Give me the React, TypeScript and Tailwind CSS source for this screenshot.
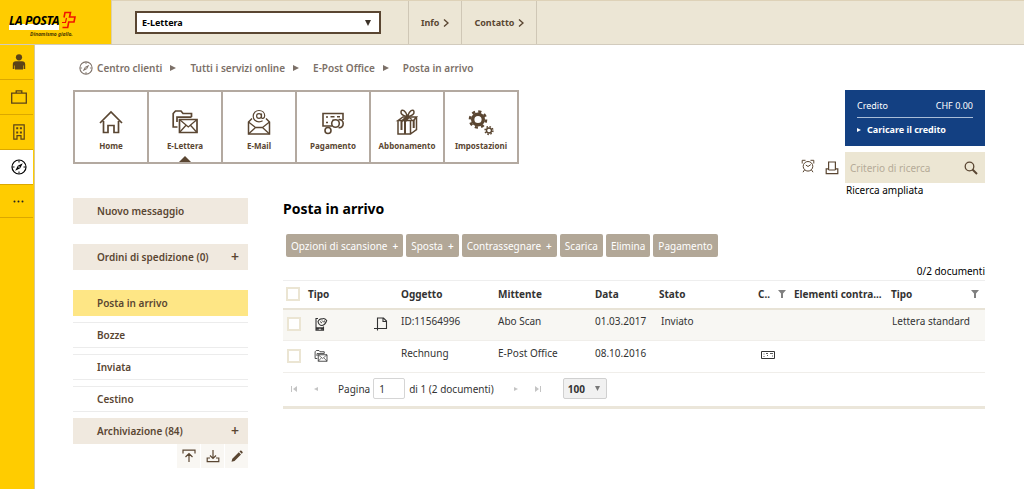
import { useState } from 'react';
import type { ReactNode } from 'react';

type IconProps = { className?: string };

const CompassIcon = ({ className }: IconProps) => (
  <svg viewBox="0 0 16 16" className={className} fill="none" stroke="currentColor">
    <circle cx="8" cy="8" r="7" strokeWidth="1.2" />
    <path d="M8 1.5v2M8 12.5v2M1.5 8h2M12.5 8h2" strokeWidth="1" />
    <path d="M11.8 4.2 9.2 9.2 4.2 11.8 6.8 6.8Z" fill="currentColor" stroke="none" />
    <circle cx="8" cy="8" r="0.8" fill="#fff" stroke="none" />
  </svg>
);

const PersonIcon = () => (
  <svg viewBox="0 0 14 16" className="w-3.5 h-4" fill="#5b4318">
    <circle cx="7" cy="3.3" r="3.1" />
    <path d="M4 7.2h6c2 0 3.2 1.2 3.2 3V15h-1.6v-3.6H11v4.2H3v-4.2h-.6V15H.8v-4.8c0-1.800 1.200-3 3.200-3Z" />
  </svg>
);

const BriefcaseIcon = () => (
  <svg viewBox="0 0 16 14" className="w-4 h-3.5" fill="none" stroke="#5b4318" strokeWidth="1.3">
    <path d="M.7 3.2h14.6v10H.7ZM5.2 3V.8h5.6V3" />
  </svg>
);

const BuildingIcon = () => (
  <svg viewBox="0 0 12 16" className="w-3 h-4" fill="none" stroke="#5b4318" strokeWidth="1.2">
    <path d="M.8.8h10.4v14.4H8v-3.6H4v3.6H.8Z" />
    <path d="M3.2 4.2h2M6.9 4.2h2M3.2 8.4h2M6.900 8.400h2" strokeWidth="2" />
  </svg>
);

const DotsIcon = () => (
  <svg viewBox="0 0 11 3" className="w-[11px] h-[3px]" fill="#222">
    <circle cx="1.5" cy="1.5" r="1" />
    <circle cx="5.5" cy="1.5" r="1" />
    <circle cx="9.5" cy="1.5" r="1" />
  </svg>
);

const HomeIcon = () => (
  <svg viewBox="0 0 28 28" className="size-7" fill="none" stroke="#5a4632" strokeWidth="1.7">
    <path d="M3 15 14 4l11 11M6.5 13v11.5H11V17.500h6v7h4.500V13" />
  </svg>
);

const FolderMailIcon = ({ className }: IconProps) => (
  <svg viewBox="0 0 28 28" className={className} fill="none" stroke="currentColor" strokeWidth="1.7">
    <path d="M6.5 19H2.2V5.5L4.5 3H10l2 2.500h8.500V9" />
    <path d="M6 14V9.200h14.500" />
    <path d="M8.5 11.5H26v13H8.500Z" />
    <path d="m8.500 11.500 8.800 7.500 8.700-7.500M8.500 24.500l6.300-7M26 24.500l-6.300-7" strokeWidth="1.300" />
  </svg>
);

const EmailIcon = () => (
  <svg viewBox="0 0 28 28" className="size-7" fill="none" stroke="#5a4632" strokeWidth="1.5">
    <path d="M7 10.500 3.500 14v12h21V14L21 10.500" />
    <path d="m3.500 14 7 5.500L3.500 26M24.500 14l-7 5.500 7 6.500M10.500 19.500h7" strokeWidth="1.300" />
    <circle cx="14" cy="8" r="2.400" strokeWidth="1.200" />
    <path
      d="M16.500 5.500v3.700c0 2 3.200 1.500 3.200-1.500 0-3.200-2.500-5.200-5.700-5.200S8.200 5 8.200 8.200s2.600 5.600 5.800 5.600c1.500 0 2.700-.4 3.600-1"
      strokeWidth="1.200"
    />
  </svg>
);

const PaymentIcon = () => (
  <svg viewBox="0 0 28 28" className="size-7" fill="none" stroke="#5a4632" strokeWidth="1.6">
    <path d="M13 18H4V5.500h20V12" />
    <path d="M7 9h2M7 14.500h2M11.500 8.800h4M18 8.800h3M14 14.500v-3" strokeWidth="1.500" />
    <circle cx="16.500" cy="15.500" r="3.800" fill="#fff" />
    <path d="M19.500 11.800c2.500-.8 4.700.8 4.700 3.700s-2 4.600-4.700 4" />
    <circle cx="9" cy="22.500" r="3" fill="#fff" />
  </svg>
);

const GiftIcon = () => (
  <svg viewBox="0 0 28 28" className="size-7" fill="none" stroke="#5a4632" strokeWidth="1.5">
    <path d="m5 12.500 5-3.500h13.500l-3 3.500ZM5 12.500V26h12.500V12.500M17.500 26l6-4.500V9" />
    <path d="M8.500 22v-8.500l4.500-4M12 26V13.500l3.500-4M20.700 20v-8" strokeWidth="2" />
    <path d="M14.500 8.500C13 2.500 8.500.5 8 3.800c-.4 3 3.500 4.200 6.500 4.700C16 2.500 20.500.5 21 3.800c.4 3-3.500 4.200-6.500 4.700Z" />
    <path d="m14.500 8.500-3.500 3M14.500 8.500l4.500 3" />
  </svg>
);

const SettingsIcon = () => (
  <svg viewBox="0 0 28 28" className="size-7" fill="none" stroke="#5a4632">
    <circle cx="11" cy="11.500" r="5.300" strokeWidth="3.400" />
    <circle cx="11" cy="11.500" r="8" strokeWidth="2.600" strokeDasharray="3.140 3.140" />
    <circle cx="22" cy="22.500" r="2.500" strokeWidth="1.400" />
    <circle cx="22" cy="22.500" r="3.900" strokeWidth="1.500" strokeDasharray="1.530 1.530" />
  </svg>
);

const AlarmIcon = () => (
  <svg viewBox="0 0 14 14" className="size-3.5" fill="none" stroke="#5a4632" strokeWidth="1">
    <circle cx="7" cy="7.300" r="4.800" />
    <path d="M7 7.500 4.800 6M7 7.500l2.800-1.900M3.600 10.800 2 13.200M10.400 10.800l1.600 2.400M1.200 4.500V1.300h3.300M12.800 4.500V1.300H9.500" />
  </svg>
);

const PrintIcon = () => (
  <svg viewBox="0 0 14 14" className="size-3.5" fill="none" stroke="#5a4632" strokeWidth="1.2">
    <path d="M3.600 9V1h6.800v8M3.600 7.800H1.200v4.800h11.600V7.800h-2.400M3.600 9h6.800" />
  </svg>
);

const SearchIcon = () => (
  <svg viewBox="0 0 14 14" className="size-3.5" fill="none" stroke="#5a4632">
    <circle cx="5.500" cy="5.500" r="4.300" strokeWidth="1.300" />
    <path d="m8.500 8.500 4.500 4.500" strokeWidth="2" />
  </svg>
);

const FilterIcon = () => (
  <svg viewBox="0 0 8 8" className="size-2" fill="#808080">
    <path d="M0 0h8L5 3.500V8H3V3.500Z" />
  </svg>
);

const PhoneScanIcon = () => (
  <svg viewBox="0 0 14 14" className="size-3.5" fill="none" stroke="#333" strokeWidth="1.1">
    <path d="M4 1.500H2v11.700h7.500V9.500" />
    <path d="M2 12h2.800M6.800 12h2.700M2 11h7.500" strokeWidth="1.500" />
    <path d="M4 4.500C5 2.500 6.500 1.500 8 2c1.500-1 3-.5 4.700 1.500C12 5.500 10.500 8 8 8.500 6 8.500 4.500 7 4 4.500Z" />
    <path d="M6 4.500 8 6M8 3.500l1.500 1.500M10.500 3.500l-.5 2" strokeWidth=".9" />
  </svg>
);

const PageIcon = () => (
  <svg viewBox="0 0 14 14" className="size-3.5" fill="none" stroke="#333" strokeWidth="1.1">
    <path d="M3.500 13.500V1h6l3 3v7.500H0M9 1v3.500h3.500" />
  </svg>
);

const PaySlipIcon = () => (
  <svg viewBox="0 0 14 8" className="w-3.5 h-2" fill="none" stroke="#333" strokeWidth="1">
    <path d="M.5.5h13v7H.5Z" />
    <path d="M2.500 3h1M5 2.500h2M9 2.500h3M2.500 5.500h1M6 4.500h1M11 5h1" strokeWidth=".8" />
  </svg>
);

const UploadIcon = () => (
  <svg viewBox="0 0 14 14" className="size-3.5" fill="none" stroke="#5a4632" strokeWidth="1.2">
    <path d="M1 4.500V1.200h12v3.300M7 13V4.500M3.500 8 7 4.500 10.500 8" />
  </svg>
);

const DownloadIcon = () => (
  <svg viewBox="0 0 14 14" className="size-3.5" fill="none" stroke="#5a4632" strokeWidth="1.2">
    <path d="M4 9H1.200v3.600h11.600V9H10M7 1v8.500M4 6.500l3 3 3-3" />
  </svg>
);

const PencilIcon = () => (
  <svg viewBox="0 0 14 14" className="size-3.5" fill="#5a4632">
    <path d="m1.500 12.800.8-3L8.800 3.300l2.200 2.200-6.500 6.500ZM9.500 2.600l1-1c.6-.6 2.800 1.600 2.200 2.200l-1 1Z" />
  </svg>
);

const Triangle = ({ className }: IconProps) => (
  <svg viewBox="0 0 6 6" className={className} fill="currentColor">
    <path d="M0 0l6 3-6 3Z" />
  </svg>
);

const DownTriangle = ({ className }: IconProps) => (
  <svg viewBox="0 0 6 6" className={className} fill="currentColor">
    <path d="M0 0h6L3 6Z" />
  </svg>
);

const rail = [
  { label: 'Profilo', icon: <PersonIcon /> },
  { label: 'Lavoro', icon: <BriefcaseIcon /> },
  { label: 'Azienda', icon: <BuildingIcon /> },
  { label: 'Centro clienti', icon: <CompassIcon className="size-4 text-black" />, active: true },
  { label: 'Altro', icon: <DotsIcon /> },
];

const crumbs = ['Centro clienti', 'Tutti i servizi online', 'E-Post Office', 'Posta in arrivo'];

const tiles = [
  { label: 'Home', icon: <HomeIcon /> },
  { label: 'E-Lettera', icon: <FolderMailIcon className="size-7" />, active: true },
  { label: 'E-Mail', icon: <EmailIcon /> },
  { label: 'Pagamento', icon: <PaymentIcon /> },
  { label: 'Abbonamento', icon: <GiftIcon /> },
  { label: 'Impostazioni', icon: <SettingsIcon /> },
];

const actions = [
  { label: 'Opzioni di scansione', plus: true },
  { label: 'Sposta', plus: true },
  { label: 'Contrassegnare', plus: true },
  { label: 'Scarica' },
  { label: 'Elimina' },
  { label: 'Pagamento' },
];

const rows = [
  {
    id: 1,
    icon: <PhoneScanIcon />,
    attachment: <PageIcon />,
    subject: 'ID:11564996',
    sender: 'Abo Scan',
    date: '01.03.2017',
    state: 'Inviato',
    slip: null,
    type: 'Lettera standard',
  },
  {
    id: 2,
    icon: <FolderMailIcon className="size-3.5" />,
    attachment: null,
    subject: 'Rechnung',
    sender: 'E-Post Office',
    date: '08.10.2016',
    state: '',
    slip: <PaySlipIcon />,
    type: '',
  },
];

const Logo = () => (
  <a href="#" className="-mt-px w-28 shrink-0 bg-[#ffcc00] border-r border-[#d9cfae] pl-[9px] pt-2.5 block">
    <div className="flex items-center gap-0.5">
      <div className="bg-linear-to-b from-[#ffcc00] from-70% to-white to-70% text-black text-[12px] leading-[18px] pt-0.5 font-bold italic tracking-tight whitespace-nowrap">
        LA POSTA
      </div>
      <svg viewBox="0 0 16 18" className="w-4 h-[18px] shrink-0" fill="none" stroke="#f01400" strokeWidth="1.6">
        <path d="M3 6.500 4 1.500h5.500L8.500 6H14l-1 5H7.700l-1 5.500H1.500" />
        <path d="M1 11.500h3.500L5.500 7" strokeWidth="1.200" />
      </svg>
    </div>
    <div className="pl-[21px] text-[5px] leading-2 font-bold italic text-[#4d3b00]">Dinamismo giallo.</div>
  </a>
);

const MenuItem = ({ label, tone, plus }: { label: string; tone: string; plus?: boolean }) => (
  <button className={`w-full h-[26px] pl-6 pr-[9px] flex items-center justify-between text-left ${tone}`}>
    <span>{label}</span>
    {plus && <span className="text-[14px] leading-none">+</span>}
  </button>
);

const Check = ({ label }: { label: string }) => (
  <input
    type="checkbox"
    aria-label={label}
    className="appearance-none block size-3.5 border-2 border-[#ebe5d3] bg-white checked:bg-[#b2a797]"
  />
);

const PagerButton = ({ label, children }: { label: string; children: ReactNode }) => (
  <button aria-label={label} className="w-[22px] h-5 flex items-center justify-center text-[#c4c4c4]">
    {children}
  </button>
);

const App = () => {
  const [service, setService] = useState('E-Lettera');
  const [page, setPage] = useState('1');
  const [pageSize, setPageSize] = useState('100');
  const [query, setQuery] = useState('');

  return (
    <div className="min-h-screen flex flex-col bg-white font-['Noto_Sans',sans-serif] text-[10px] leading-4 text-[#333]">
      <header className="h-[45px] flex bg-[#ece6d5] border-t border-t-[#ded2b8] border-b border-b-[#d2cbbd]">
        <Logo />
        <div className="flex items-center pl-[23px] pr-[27px] border-r border-[#cfc7b6]">
          <div className="relative">
            <select
              aria-label="Servizio"
              value={service}
              onChange={(e) => setService(e.target.value)}
              className="appearance-none w-[246px] h-[23px] bg-white border-2 border-[#5a4632] px-[5px] text-[9px] font-bold text-black"
            >
              <option>E-Lettera</option>
              <option>E-Mail</option>
            </select>
            <DownTriangle className="absolute right-[10px] top-[9px] size-1.5 text-[#3c3228] pointer-events-none" />
          </div>
        </div>
        {['Info', 'Contatto'].map((item) => (
          <a
            key={item}
            href="#"
            className="flex items-center gap-1 px-3 text-[9px] font-bold text-[#5a4632] border-r border-[#cfc7b6]"
          >
            {item}
            <svg viewBox="0 0 6 8" className="w-1.5 h-2" fill="none" stroke="currentColor" strokeWidth="1.4">
              <path d="M1 .5 5 4 1 7.500" />
            </svg>
          </a>
        ))}
      </header>

      <div className="flex-1 flex">
        <nav className="w-[35px] shrink-0 bg-[#ffcc00] border-r border-[#d8c893]">
          {rail.map((item) => (
            <a
              key={item.label}
              href="#"
              aria-label={item.label}
              className={`h-[34px] mr-px pl-1 flex items-center justify-center border-b border-[#dba800] box-content last:h-8 ${
                item.active ? 'bg-white' : ''
              }`}
            >
              {item.icon}
            </a>
          ))}
        </nav>

        <div className="flex-1 min-w-0 pl-[38px] pr-[39px] pt-[15px]">
          <div className="flex items-center pl-1.5 text-[10px] font-semibold text-[#7c7068]">
            <CompassIcon className="size-3.5 mr-1" />
            {crumbs.map((crumb, idx) => (
              <span key={crumb} className="flex items-center">
                {idx > 0 && <Triangle className="size-1.5 mr-3.5 ml-2" />}
                <a href="#">{crumb}</a>
              </span>
            ))}
          </div>

          <div className="mt-3.5 flex justify-between items-start">
            <div className="flex border-2 border-r-0 border-[#b3a9a0]">
              {tiles.map((tile) => (
                <a
                  key={tile.label}
                  href="#"
                  className="relative w-[74px] h-[70px] pt-4 flex flex-col items-center gap-0.5 border-r-2 border-[#b3a9a0] text-[8px] font-bold text-[#5a4632]"
                >
                  {tile.icon}
                  {tile.label}
                  {tile.active && (
                    <svg viewBox="0 0 12 6" className="absolute bottom-0 w-3 h-1.5" fill="#5a4632">
                      <path d="M6 0l6 6H0Z" />
                    </svg>
                  )}
                </a>
              ))}
            </div>

            <div>
              <div className="ml-11 w-[140px] h-14 bg-[#134082] text-white px-3 pt-2">
                <div className="flex justify-between border-b border-[#a9bdd8] pb-[3px] text-[9px]">
                  <span>Credito</span>
                  <span>CHF 0.00</span>
                </div>
                <a href="#" className="flex items-center gap-1.5 pt-1 text-[9px] font-bold">
                  <Triangle className="size-1" />
                  Caricare il credito
                </a>
              </div>
              <div className="mt-1.5 flex items-center">
                <button aria-label="Promemoria" className="w-6 pb-1">
                  <AlarmIcon />
                </button>
                <button aria-label="Stampa" className="w-5">
                  <PrintIcon />
                </button>
                <div className="w-[140px] h-[31px] flex items-center bg-[#ece6d3] px-[5px]">
                  <input
                    aria-label="Criterio di ricerca"
                    placeholder="Criterio di ricerca"
                    value={query}
                    onChange={(e) => setQuery(e.target.value)}
                    className="flex-1 min-w-0 bg-transparent outline-none placeholder:text-[#b5ab98]"
                  />
                  <button aria-label="Cerca" className="pr-0.5">
                    <SearchIcon />
                  </button>
                </div>
              </div>
              <a href="#" className="ml-[45px] block leading-[15px] text-black">
                Ricerca ampliata
              </a>
            </div>
          </div>

          <div className="flex">
            <aside className="w-[175px] shrink-0 font-semibold text-[#5a4632]">
              <MenuItem label="Nuovo messaggio" tone="bg-[#f0e9df]" />
              <div className="h-5" />
              <MenuItem label="Ordini di spedizione (0)" tone="bg-[#f0e9df]" plus />
              <div className="h-5" />
              <div className="flex flex-col gap-1.5">
                <MenuItem label="Posta in arrivo" tone="bg-[#fee685]" />
                <MenuItem label="Bozze" tone="border-y border-[#ececec]" />
                <MenuItem label="Inviata" tone="border-y border-[#ececec]" />
                <MenuItem label="Cestino" tone="border-y border-[#ececec]" />
                <MenuItem label="Archiviazione (84)" tone="bg-[#f0e9df]" plus />
              </div>
              <div className="flex justify-end gap-px">
                <button aria-label="Carica" className="w-[23px] h-6 bg-[#f9f7f3] flex items-center justify-center">
                  <UploadIcon />
                </button>
                <button aria-label="Scarica" className="w-[23px] h-6 bg-[#f9f7f3] flex items-center justify-center">
                  <DownloadIcon />
                </button>
                <button aria-label="Modifica" className="w-[23px] h-6 bg-[#f9f7f3] flex items-center justify-center">
                  <PencilIcon />
                </button>
              </div>
            </aside>

            <main className="flex-1 min-w-0 ml-[35px]">
              <h1 className="text-[14px] leading-[22px] font-bold text-black">Posta in arrivo</h1>
              <div className="mt-3.5 ml-[3px] flex gap-[3px]">
                {actions.map((action) => (
                  <button
                    key={action.label}
                    className="h-[23px] px-[5px] rounded-xs bg-[#b2a797] text-white whitespace-nowrap"
                  >
                    {action.label}
                    {action.plus && <span className="pl-[5px] font-semibold">+</span>}
                  </button>
                ))}
              </div>
              <div className="mt-1.5 mb-px text-right text-black">0/2 documenti</div>

              <table className="w-full table-fixed border-t border-[#eeeeee]">
                <colgroup>
                  <col className="w-[25px]" />
                  <col className="w-[66px]" />
                  <col className="w-[27px]" />
                  <col className="w-[97px]" />
                  <col className="w-[97px]" />
                  <col className="w-16" />
                  <col />
                  <col className="w-9" />
                  <col className="w-[97px]" />
                  <col className="w-[94px]" />
                </colgroup>
                <thead>
                  <tr className="h-7 text-left border-b-2 border-[#e8e3d6]">
                    <th className="pl-[3px]">
                      <Check label="Seleziona tutto" />
                    </th>
                    <th colSpan={2}>Tipo</th>
                    <th>Oggetto</th>
                    <th>Mittente</th>
                    <th>Data</th>
                    <th>Stato</th>
                    <th>
                      <div className="flex items-center gap-2">
                        C.. <FilterIcon />
                      </div>
                    </th>
                    <th>Elementi contra...</th>
                    <th>
                      <div className="flex items-center justify-between pr-1.5">
                        Tipo <FilterIcon />
                      </div>
                    </th>
                  </tr>
                </thead>
                <tbody>
                  {rows.map((row) => (
                    <tr key={row.id} className="h-8 border-b border-[#f0eeea] odd:bg-[#f8f7f3]">
                      <td className="pl-1 pb-0.5">
                        <Check label={`Seleziona ${row.subject}`} />
                      </td>
                      <td className="pl-1.5 pb-0.5">{row.icon}</td>
                      <td className="pb-0.5">{row.attachment}</td>
                      <td className="pb-2">{row.subject}</td>
                      <td className="pb-2">{row.sender}</td>
                      <td className="pb-2">{row.date}</td>
                      <td className="pb-2 pl-0.5">{row.state}</td>
                      <td className="pl-[3px] pb-1">{row.slip}</td>
                      <td></td>
                      <td className="pb-2 pl-px">{row.type}</td>
                    </tr>
                  ))}
                </tbody>
              </table>

              <div className="h-9 pb-0.5 flex items-center border-b-3 border-[#ebe6da]">
                <PagerButton label="Prima pagina">
                  <svg viewBox="0 0 6 6" className="size-1.5" fill="currentColor">
                    <path d="M0 0h1v6H0ZM6 0v6L2 3Z" />
                  </svg>
                </PagerButton>
                <PagerButton label="Pagina precedente">
                  <Triangle className="size-1 rotate-180" />
                </PagerButton>
                <label className="flex items-center gap-[3px] ml-[11px]">
                  Pagina
                  <input
                    value={page}
                    onChange={(e) => setPage(e.target.value)}
                    className="w-8 h-[21px] px-[5px] border border-[#d5d5d5] rounded-xs outline-none"
                  />
                </label>
                <span className="ml-1 mr-[11px]">di 1 (2 documenti)</span>
                <PagerButton label="Pagina successiva">
                  <Triangle className="size-1" />
                </PagerButton>
                <PagerButton label="Ultima pagina">
                  <svg viewBox="0 0 6 6" className="size-1.5" fill="currentColor">
                    <path d="M5 0h1v6H5ZM0 0v6l4-3Z" />
                  </svg>
                </PagerButton>
                <div className="relative ml-3.5">
                  <select
                    aria-label="Documenti per pagina"
                    value={pageSize}
                    onChange={(e) => setPageSize(e.target.value)}
                    className="appearance-none w-11 h-[21px] px-1 bg-[#f1f1f1] border border-[#d0d0d0] rounded-xs font-bold"
                  >
                    <option>100</option>
                    <option>50</option>
                  </select>
                  <DownTriangle className="absolute right-[7px] top-2 w-[5px] h-[5px] text-[#777] pointer-events-none" />
                </div>
              </div>
            </main>
          </div>
        </div>
      </div>
    </div>
  );
};

export default App;
